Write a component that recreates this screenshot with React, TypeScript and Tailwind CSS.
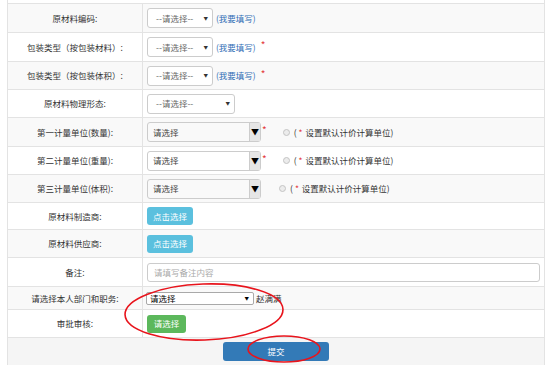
import React from "react";

const font = { fontFamily: '"Noto Sans CJK SC", "Noto Sans", sans-serif' };

const Row = ({
  label,
  h,
  bg,
  children,
}: {
  label: string;
  h: string;
  bg: string;
  children?: React.ReactNode;
}) => (
  <div className={`flex border-t border-[#e3e3e3] ${h} ${bg}`}>
    <div className="w-[135px] shrink-0 border-r border-[#e3e3e3] flex items-center justify-center text-[8.5px] text-[#333]">
      {label}
    </div>
    <div className="flex-1 flex items-center pl-[4px]">{children}</div>
  </div>
);

const Star = ({ ml }: { ml: string }) => (
  <span className={`self-start mt-[7px] ${ml} text-[10px] leading-none text-[#e4393c]`}>*</span>
);

const SmallSelect = ({ w }: { w: string }) => (
  <div className={`${w} h-[20px] border border-[#ccc] rounded-[3px] bg-white flex items-center justify-between pl-[8px] pr-[4px] text-[8.5px] text-[#666]`}>
    <span>--请选择--</span>
    <span className="text-[4.5px] text-[#333]">▼</span>
  </div>
);

const Fill = () => <span className="ml-[3px] text-[8.5px] text-[#2f6db5]">(我要填写)</span>;

const UnitSelect = () => (
  <div className="w-[114px] h-[20px] border border-[#ccc] rounded-[3px] flex items-stretch text-[8.5px] text-[#444]">
    <div className="flex-1 flex items-center pl-[5px]">请选择</div>
    <div className="w-[11px] bg-[#e6e6e6] border-l border-[#ccc] flex items-center justify-center text-[8px] text-black">▼</div>
  </div>
);

const PriceUnit = () => (
  <div className="flex items-center text-[8.5px] text-[#333]">
    <span className="w-[7px] h-[7px] rounded-full border border-[#c4c4c4] bg-[#ececec]" />
    <span className="ml-[4px]">(</span>
    <span className="ml-[2px] text-[#e4393c]">*</span>
    <span className="ml-[3px]">设置默认计价计算单位)</span>
  </div>
);

const Btn = ({ text, color, w }: { text: string; color: string; w: string }) => (
  <div className={`${w} h-[18px] rounded-[3px] ${color} flex items-center justify-center text-[8.5px] text-white`}>
    {text}
  </div>
);

export default function App() {
  return (
    <div className="relative w-[554px] h-[365px] overflow-hidden bg-white" style={font}>
      <div className="ml-[7px] w-[538px] h-[365px] border-l border-r border-[#e3e3e3] flex flex-col">
        <div className="h-[3px]" />
        <Row label="原材料编码:" h="h-[29px]" bg="bg-[#f9f9f9]">
          <SmallSelect w="w-[66px]" />
          <Fill />
        </Row>
        <Row label="包装类型（按包装材料）:" h="h-[29px]" bg="bg-white">
          <SmallSelect w="w-[66px]" />
          <Fill />
          <Star ml="ml-[5px]" />
        </Row>
        <Row label="包装类型（按包装体积）:" h="h-[28px]" bg="bg-[#f9f9f9]">
          <SmallSelect w="w-[66px]" />
          <Fill />
          <Star ml="ml-[5px]" />
        </Row>
        <Row label="原材料物理形态:" h="h-[28px]" bg="bg-white">
          <SmallSelect w="w-[88px]" />
        </Row>
        <Row label="第一计量单位(数量):" h="h-[29px]" bg="bg-[#f9f9f9]">
          <UnitSelect />
          <Star ml="ml-[1px]" />
          <div className="ml-[16px]">
            <PriceUnit />
          </div>
        </Row>
        <Row label="第二计量单位(重量):" h="h-[28px]" bg="bg-white">
          <UnitSelect />
          <Star ml="ml-[1px]" />
          <div className="ml-[16px]">
            <PriceUnit />
          </div>
        </Row>
        <Row label="第三计量单位(体积):" h="h-[28px]" bg="bg-[#f9f9f9]">
          <UnitSelect />
          <div className="ml-[18px]">
            <PriceUnit />
          </div>
        </Row>
        <Row label="原材料制造商:" h="h-[27px]" bg="bg-white">
          <Btn text="点击选择" color="bg-[#5bc0de]" w="w-[46px]" />
        </Row>
        <Row label="原材料供应商:" h="h-[28px]" bg="bg-[#f9f9f9]">
          <Btn text="点击选择" color="bg-[#5bc0de]" w="w-[46px]" />
        </Row>
        <Row label="备注:" h="h-[29px]" bg="bg-white">
          <div className="w-[393px] h-[19px] border border-[#ccc] rounded-[3px] flex items-center pl-[6px] text-[8.5px] text-[#aaa]">
            请填写备注内容
          </div>
        </Row>
        <Row label="请选择本人部门和职务:" h="h-[23px]" bg="bg-[#f9f9f9]">
          <div className="-ml-[1px] w-[108px] h-[13px] border border-[#a9a9a9] rounded-[2px] bg-white flex items-center justify-between pl-[3px] pr-[4px] text-[8.5px] text-black">
            <span>请选择</span>
            <span className="text-[4.5px]">▼</span>
          </div>
          <span className="ml-[2px] text-[8.5px] text-[#333]">赵满满</span>
        </Row>
        <Row label="审批审核:" h="h-[28px]" bg="bg-white">
          <Btn text="请选择" color="bg-[#5cb85c]" w="w-[39px]" />
        </Row>
        <div className="flex-1 border-t border-[#e3e3e3] bg-[#f5f5f5] flex justify-center pt-[4px]">
          <div className="w-[106px] h-[19px] rounded-[3px] bg-[#337ab7] flex items-center justify-center text-[8.5px] text-white">
            提交
          </div>
        </div>
      </div>

      <svg className="absolute left-0 top-0 pointer-events-none" width="554" height="365">
        <ellipse cx="204" cy="312" rx="79" ry="28" fill="none" stroke="#e8141c" strokeWidth="1.6" transform="rotate(-2 204 312)" />
        <ellipse cx="284" cy="349" rx="36" ry="13" fill="none" stroke="#e8141c" strokeWidth="1.6" />
      </svg>
    </div>
  );
}
